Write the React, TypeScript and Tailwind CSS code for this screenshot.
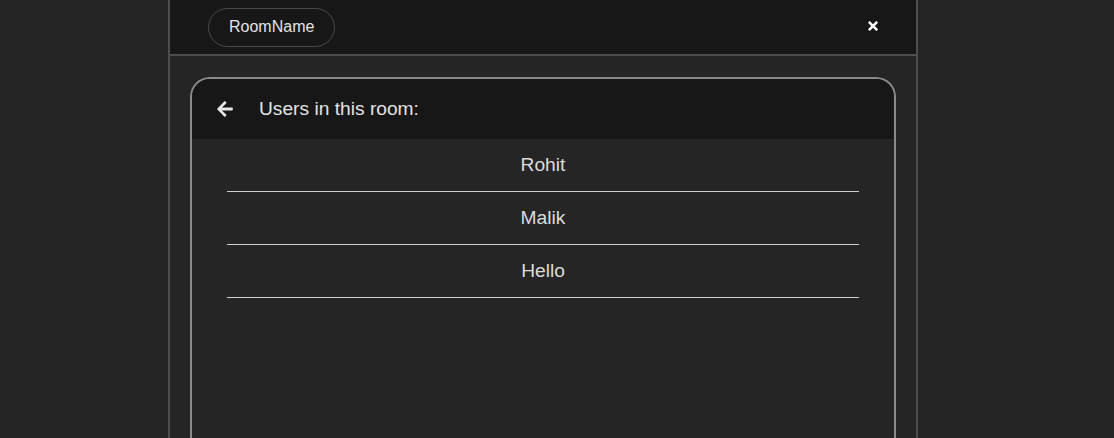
import { FaArrowLeft, FaTimes } from "react-icons/fa";

const USERS = ["Rohit", "Malik", "Hello"];

export default function App() {
  return (
    <div
      className="h-[438px] w-full overflow-hidden bg-[#252525]"
      style={{ fontFamily: "Arial, 'Liberation Sans', sans-serif" }}
    >
      <div className="ml-[168px] flex h-full w-[750px] flex-col border-x-2 border-[#4d4d4d]">
        {/* top bar */}
        <div className="flex h-[56px] shrink-0 items-center justify-between border-b-2 border-[#4d4d4d] bg-[#171717] pl-[38px] pr-[36px]">
          <div className="flex h-[39px] items-center rounded-full border border-[#4a4a4a] px-5 text-[16px] text-[#e3e3e3]">
            RoomName
          </div>
          <FaTimes className="mb-[2px] text-white" size={14} />
        </div>

        {/* users panel */}
        <div className="flex-1 px-5 pt-[21px]">
          <div className="h-full overflow-hidden rounded-t-[20px] border-2 border-b-0 border-[#8a8a8a] bg-[#252525]">
            <div className="flex h-[60px] items-center bg-[#171717] pl-[24px] text-[19.2px] text-[#e3e3e3]">
              <FaArrowLeft className="text-[#e6e6e6]" size={18} />
              <span className="ml-[25px]">Users in this room:</span>
            </div>
            <ul className="mx-auto w-[90%]">
              {USERS.map((u) => (
                <li
                  key={u}
                  className="flex h-[53px] items-center justify-center border-b border-[#cfcfcf] text-[19.2px] text-[#dcdcdc]"
                >
                  {u}
                </li>
              ))}
            </ul>
          </div>
        </div>
      </div>
    </div>
  );
}
